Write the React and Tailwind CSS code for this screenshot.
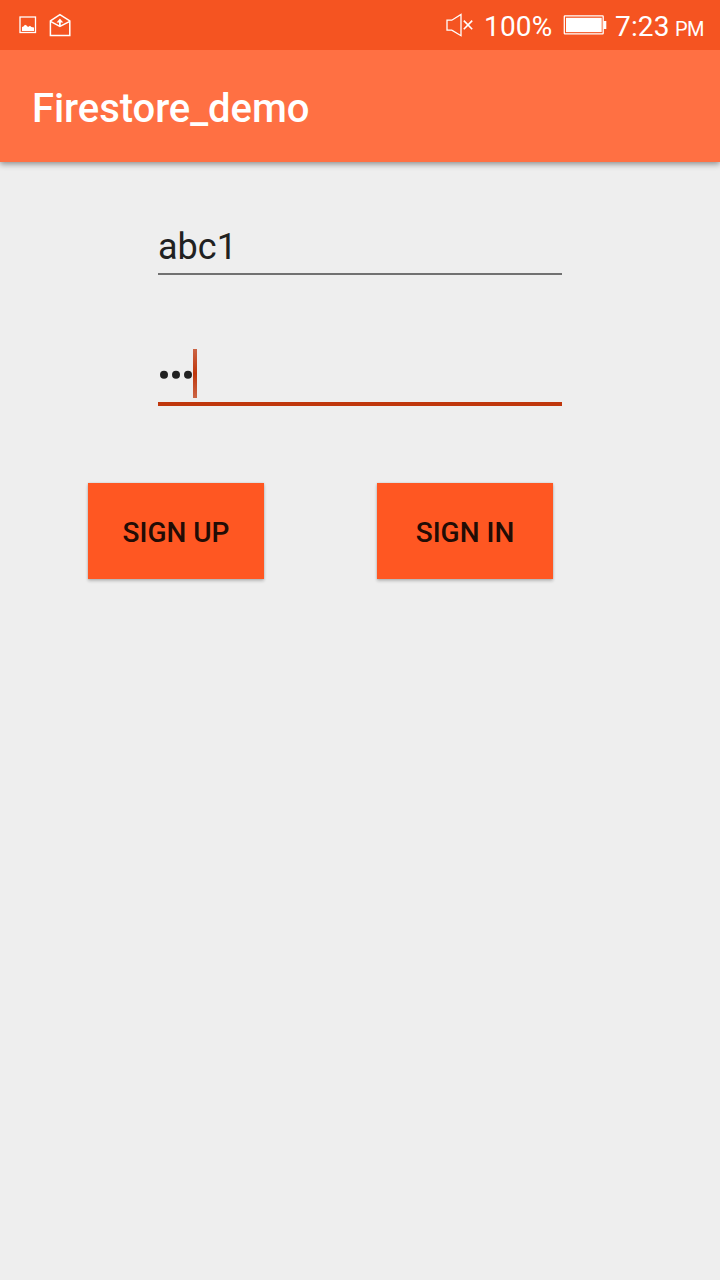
function StatusBar() {
  return (
    <header className="relative z-10 flex h-[50px] items-center bg-[#f55421] text-white">
      <svg className="ml-[18px] shrink-0" width="56" height="50" viewBox="18 0 56 50" fill="none" stroke="white">
        <rect x="20" y="17" width="15.5" height="15.5" strokeWidth="1.3" />
        <path d="M22 31V27L23.4 26.4L25 24.8L26.6 25.6L28 27L30 25.8L31.4 27L34 27.6V31Z" fill="white" stroke="none" />
        <path d="M50.4 20.8L59.9 14.7L69.8 20.8V35.4H50.4Z" strokeWidth="1.5" />
        <path d="M50.4 21.4L59.9 26.4L69.8 21.4" strokeWidth="1.4" />
        <path d="M59.9 26V20.5" strokeWidth="1.8" />
        <path d="M59.9 18.4L63.2 22.4H56.6Z" fill="white" stroke="none" />
      </svg>
      <svg className="ml-auto shrink-0" width="30" height="50" viewBox="445 0 30 50" fill="none" stroke="white" strokeWidth="1.3">
        <path d="M447 20.2H451.8L461 14.4V35.7L451.8 30.2H447Z" />
        <path d="M463.8 20.6L472.2 29.2M472.2 20.6L463.8 29.2" strokeWidth="1.6" />
      </svg>
      <span className="ml-[9px] w-[69px] pt-[3px] text-[28px] leading-[32px] tracking-[0.15px]">100%</span>
      <svg className="ml-[10px] shrink-0" width="44" height="50" viewBox="563 0 44 50" fill="none" stroke="white">
        <rect x="564.3" y="15.9" width="38.9" height="18" rx="0.6" strokeWidth="1.3" />
        <rect x="566" y="17.8" width="35.7" height="14.3" fill="white" stroke="none" />
        <rect x="603.5" y="21" width="2.8" height="8" fill="white" stroke="none" />
      </svg>
      <span className="ml-[8px] mr-[16px] flex w-[89px] items-baseline whitespace-nowrap pt-[5px] text-[28px] leading-[32px] tracking-[0.15px]">
        7:23<span className="ml-[5.5px] text-[20px] tracking-[-0.6px]">PM</span>
      </span>
    </header>
  );
}

function ActionButton({ children }) {
  return (
    <button className="flex h-24 w-44 items-center justify-center bg-[#ff5722] pt-[3px] text-[28px] font-medium leading-[32px] text-[#220c05] shadow-[0_2px_3px_rgba(0,0,0,0.22),0_0_2px_rgba(0,0,0,0.14)]">
      {children}
    </button>
  );
}

export default function App() {
  return (
    <div className="flex min-h-screen w-full flex-col bg-[#eeeeee] font-['Roboto',sans-serif]">
      <StatusBar />
      <div className="flex h-28 items-center bg-[#ff7043] pl-[32px] pt-[6px] shadow-[0_2px_6px_rgba(0,0,0,0.42)]">
        <h1 className="text-[40px] font-medium leading-[48px] tracking-[-0.06px] text-white">Firestore_demo</h1>
      </div>
      <main className="flex flex-col">
        <div className="ml-[158px] mt-[64px] flex h-[49px] w-[404px] items-start border-b-2 border-[#717171] text-[36px] leading-[42px] text-[#212121]">
          abc1
        </div>
        <div className="ml-[158px] mt-[74px] flex h-[57px] w-[404px] items-start border-b-4 border-[#bf360c]">
          <svg width="35" height="49" viewBox="0 0 35 49" fill="#212121">
            <circle cx="6" cy="25.8" r="4" />
            <circle cx="18" cy="25.8" r="4" />
            <circle cx="30" cy="25.8" r="4" />
          </svg>
          <span className="h-[49px] w-1 bg-linear-to-b from-[#bf360c]/75 via-[#bf360c] to-[#bf360c]/75" />
        </div>
        <div className="ml-[88px] mt-[77px] flex gap-[113px]">
          <ActionButton>SIGN UP</ActionButton>
          <ActionButton>SIGN IN</ActionButton>
        </div>
      </main>
    </div>
  );
}
